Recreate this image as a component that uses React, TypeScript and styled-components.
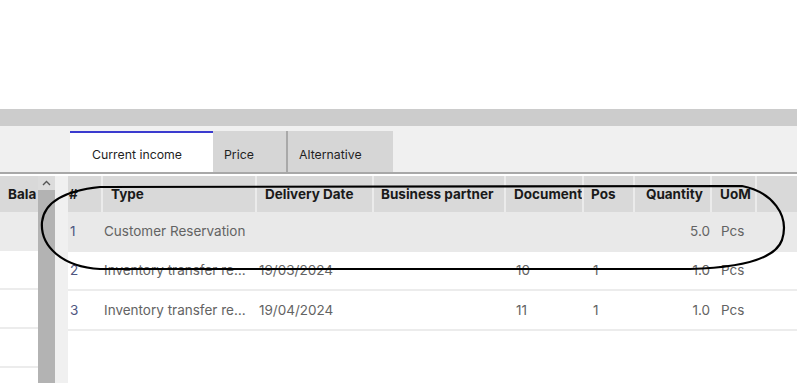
import styled, { createGlobalStyle } from 'styled-components';

const GlobalStyle = createGlobalStyle`
  html, body {
    margin: 0;
    padding: 0;
    background: #ffffff;
  }
  body {
    font-family: Inter, "Noto Sans", Arial, sans-serif;
    font-size: 13.5px;
    overflow: hidden;
  }
`;

const Page = styled.div`
  position: relative;
  width: 797px;
  height: 383px;
  overflow: hidden;
  display: flex;
  flex-direction: column;
`;

const TopSpace = styled.div`
  height: 109px;
  background: #ffffff;
`;

const GrayBar = styled.div`
  height: 17px;
  background: #cccccc;
`;

const TabStrip = styled.div`
  height: 46px;
  background: #f0f0f0;
  border-bottom: 2px solid #a8a8a8;
  display: flex;
  align-items: flex-end;
  padding-left: 70px;
`;

const Tab = styled.div<{ $active?: boolean; $width: number }>`
  box-sizing: border-box;
  width: ${(p) => p.$width}px;
  height: 41px;
  display: flex;
  align-items: center;
  padding-left: ${(p) => (p.$active ? 22 : 11)}px;
  padding-top: 3px;
  color: #1f1f1f;
  font-size: 12.3px;
  background: ${(p) => (p.$active ? '#ffffff' : '#d6d6d6')};
  border-top: 2px solid ${(p) => (p.$active ? '#3b3bcf' : '#d6d6d6')};
`;

const TabDivider = styled.div`
  width: 2px;
  height: 41px;
  background: #a9a9a9;
`;

const Body = styled.div`
  flex: 1;
  display: flex;
  padding-top: 2px;
  background: #ffffff;
`;

const LeftPanel = styled.div`
  width: 38px;
  overflow: hidden;
  display: flex;
  flex-direction: column;
`;

const LeftHeader = styled.div`
  height: 36px;
  background: #d9d9d9;
  display: flex;
  align-items: center;
  padding-left: 8px;
  font-weight: 700;
  color: #1a1a1a;
  white-space: nowrap;
  overflow: hidden;
`;

const LeftRow = styled.div<{ $selected?: boolean }>`
  height: 37px;
  flex-shrink: 0;
  background: ${(p) => (p.$selected ? '#ebebeb' : '#ffffff')};
  border-bottom: 2px solid ${(p) => (p.$selected ? '#ebebeb' : '#ececec')};
`;

const Scrollbar = styled.div`
  width: 17px;
  display: flex;
  flex-direction: column;
`;

const ScrollArrow = styled.div`
  height: 14px;
  background: #dcdcdc;
  display: flex;
  align-items: center;
  justify-content: center;
`;

const ScrollTrack = styled.div`
  flex: 1;
  background: #b3b3b3;
`;

const Gutter = styled.div`
  width: 13px;
  background: #f0f0f0;
`;

const Table = styled.div`
  flex: 1;
  display: flex;
  flex-direction: column;
`;

const columns = '33px 152px 115px 130px 76px 49px 75px 43px 1fr';

const HeaderRow = styled.div`
  display: grid;
  grid-template-columns: ${columns};
  column-gap: 2px;
  background: #ebebeb;
  height: 36px;
`;

const HeaderCell = styled.div<{ $pad: number; $right?: boolean }>`
  background: #d9d9d9;
  display: flex;
  align-items: center;
  justify-content: ${(p) => (p.$right ? 'flex-end' : 'flex-start')};
  padding: ${(p) => (p.$right ? `0 ${p.$pad}px 0 0` : `0 0 0 ${p.$pad}px`)};
  font-weight: 700;
  color: #1a1a1a;
  white-space: nowrap;
  overflow: hidden;
`;

const Row = styled.div<{ $selected?: boolean }>`
  display: grid;
  grid-template-columns: ${columns};
  column-gap: 2px;
  height: 37.5px;
  flex-shrink: 0;
  background: ${(p) => (p.$selected ? '#e9e9e9' : '#ffffff')};
  border-bottom: 2px solid ${(p) => (p.$selected ? '#e9e9e9' : '#ececec')};
`;

const Cell = styled.div<{ $pad: number; $right?: boolean; $num?: boolean }>`
  display: flex;
  align-items: center;
  justify-content: ${(p) => (p.$right ? 'flex-end' : 'flex-start')};
  padding: ${(p) => (p.$right ? `0 ${p.$pad}px 0 0` : `0 4px 0 ${p.$pad}px`)};
  color: ${(p) => (p.$num ? '#4d5680' : '#636363')};
  white-space: nowrap;
  overflow: hidden;
  min-width: 0;
`;

const Ellipsis = styled.span`
  display: block;
  min-width: 0;
  max-width: 100%;
  overflow: hidden;
  text-overflow: ellipsis;
  white-space: nowrap;
`;

const Annotation = styled.svg`
  position: absolute;
  left: 0;
  top: 0;
  pointer-events: none;
`;

type Line = {
  no: string;
  type: string;
  date: string;
  partner: string;
  doc: string;
  pos: string;
  qty: string;
  uom: string;
};

const lines: Line[] = [
  { no: '1', type: 'Customer Reservation', date: '', partner: '', doc: '', pos: '', qty: '5.0', uom: 'Pcs' },
  { no: '2', type: 'Inventory transfer request', date: '19/03/2024', partner: '', doc: '10', pos: '1', qty: '1.0', uom: 'Pcs' },
  { no: '3', type: 'Inventory transfer request', date: '19/04/2024', partner: '', doc: '11', pos: '1', qty: '1.0', uom: 'Pcs' },
];

export default function App() {
  return (
    <>
      <GlobalStyle />
      <Page>
        <TopSpace />
        <GrayBar />
        <TabStrip>
          <Tab $active $width={143}>Current income</Tab>
          <Tab $width={73}>Price</Tab>
          <TabDivider />
          <Tab $width={105}>Alternative</Tab>
        </TabStrip>
        <Body>
          <LeftPanel>
            <LeftHeader>Bala</LeftHeader>
            <LeftRow $selected />
            <LeftRow />
            <LeftRow />
            <LeftRow />
          </LeftPanel>
          <Scrollbar>
            <ScrollArrow>
              <svg width="9" height="6" viewBox="0 0 9 6">
                <path d="M1 5 L4.5 1.5 L8 5" fill="none" stroke="#555" strokeWidth="1.4" />
              </svg>
            </ScrollArrow>
            <ScrollTrack />
          </Scrollbar>
          <Gutter />
          <Table>
            <HeaderRow>
              <HeaderCell $pad={1}>#</HeaderCell>
              <HeaderCell $pad={8}>Type</HeaderCell>
              <HeaderCell $pad={8}>Delivery Date</HeaderCell>
              <HeaderCell $pad={7}>Business partner</HeaderCell>
              <HeaderCell $pad={8}>Document</HeaderCell>
              <HeaderCell $pad={7}>Pos</HeaderCell>
              <HeaderCell $pad={7} $right>Quantity</HeaderCell>
              <HeaderCell $pad={8}>UoM</HeaderCell>
              <HeaderCell $pad={8} />
            </HeaderRow>
            {lines.map((l, i) => (
              <Row key={l.no} $selected={i === 0}>
                <Cell $pad={2} $num>{l.no}</Cell>
                <Cell $pad={1}><Ellipsis>{l.type}</Ellipsis></Cell>
                <Cell $pad={2}>{l.date}</Cell>
                <Cell $pad={7}>{l.partner}</Cell>
                <Cell $pad={10}>{l.doc}</Cell>
                <Cell $pad={9}>{l.pos}</Cell>
                <Cell $pad={0} $right>{l.qty}</Cell>
                <Cell $pad={9}>{l.uom}</Cell>
                <Cell $pad={0} />
              </Row>
            ))}
          </Table>
        </Body>
        <Annotation width="797" height="383" viewBox="0 0 797 383">
          <path
            d="M 100 187 L 742 186 C 772 192, 790 215, 782 240 C 774 262, 730 268, 690 269 L 100 269 C 62 267, 40 246, 42 222 C 44 204, 62 191, 100 187 Z"
            fill="none"
            stroke="#000"
            strokeWidth="2.2"
          />
        </Annotation>
      </Page>
    </>
  );
}
